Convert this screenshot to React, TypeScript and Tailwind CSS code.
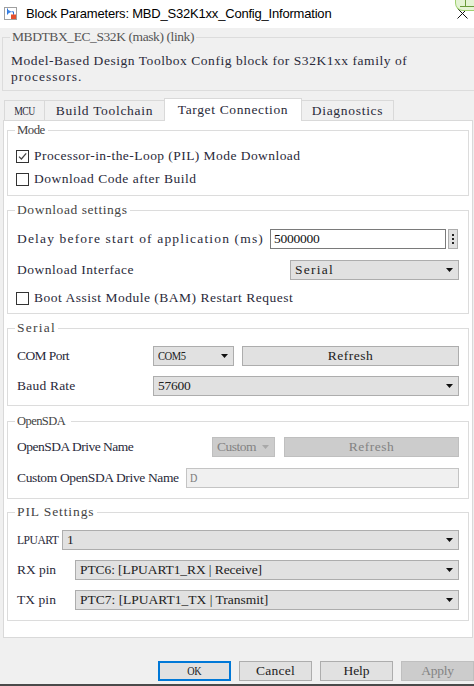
import React, { useLayoutEffect, useRef, useState } from 'react'

let canvas: HTMLCanvasElement | null = null

// SimSun-like look: serif glyphs fitted to a fixed 6.5px advance per character.
// Wide (caps-heavy) strings get squeezed horizontally instead of overlapping.
function T({ children, cw = 6.5, center }: { children: string; cw?: number; center?: boolean }) {
  const ref = useRef<HTMLSpanElement>(null)
  const [fit, setFit] = useState({ ls: 0, sx: 1 })
  useLayoutEffect(() => {
    const measure = () => {
      const el = ref.current
      if (!el) return
      if (!canvas) canvas = document.createElement('canvas')
      const ctx = canvas.getContext('2d')
      if (!ctx) return
      const cs = getComputedStyle(el)
      ctx.font = `${cs.fontWeight} ${cs.fontSize} ${cs.fontFamily}`
      const w = ctx.measureText(children).width
      const n = children.length
      const target = cw * n
      let ls = (target - w) / n
      let sx = 1
      if (ls < -0.6) {
        ls = -0.6
        sx = Math.min(1, (target * 1.06) / (w + ls * n))
      }
      setFit({ ls, sx })
    }
    measure()
    document.fonts?.ready.then(measure)
  }, [children, cw])
  return (
    <span
      ref={ref}
      className="inline-block whitespace-pre"
      style={{
        letterSpacing: `${fit.ls}px`,
        transform: fit.sx !== 1 ? `scaleX(${fit.sx})` : undefined,
        transformOrigin: center ? 'center' : 'left',
      }}
    >
      {children}
    </span>
  )
}

function Arrow({ disabled }: { disabled?: boolean }) {
  return (
    <svg width="7" height="4" viewBox="0 0 7 4" className="shrink-0">
      <path d="M0 0h7L3.5 4z" fill={disabled ? '#a8a8a8' : '#111'} />
    </svg>
  )
}

function Select({ value, className = '', disabled }: { value: string; className?: string; disabled?: boolean }) {
  return (
    <div
      className={`flex h-[20px] items-center justify-between border pl-[4px] pr-[5px] ${
        disabled ? 'border-[#bfbfbf] bg-[#cccccc] text-[#838383]' : 'border-[#adadad] bg-[#e1e1e1] text-[#222]'
      } ${className}`}
    >
      <T>{value}</T>
      <Arrow disabled={disabled} />
    </div>
  )
}

function Button({ label, className = '', disabled }: { label: string; className?: string; disabled?: boolean }) {
  return (
    <div
      className={`flex h-[20px] items-center justify-center border ${
        disabled ? 'border-[#bfbfbf] bg-[#cccccc] text-[#838383]' : 'border-[#adadad] bg-[#e1e1e1] text-[#222]'
      } ${className}`}
    >
      <T center>{label}</T>
    </div>
  )
}

function Check({ checked, label }: { checked?: boolean; label: string }) {
  return (
    <div className="flex h-[20px] items-center gap-[5px]">
      <span className="-ml-[1px] flex h-[13px] w-[13px] items-center justify-center border border-[#333] bg-white">
        {checked && (
          <svg width="9" height="9" viewBox="0 0 9 9">
            <path d="M1 4.6l2.4 2.4L8.2 1.4" stroke="#444" strokeWidth="1.2" fill="none" />
          </svg>
        )}
      </span>
      <T>{label}</T>
    </div>
  )
}

function Group({ title, children, className = '' }: { title: string; children: React.ReactNode; className?: string }) {
  return (
    <fieldset className={`border border-[#dcdcdc] px-[9px] ${className}`}>
      <legend className="-ml-[2px] px-[2px] leading-[16px] text-[#444]">
        <T>{title}</T>
      </legend>
      {children}
    </fieldset>
  )
}

function Label({ text, w }: { text: string; w: string }) {
  return (
    <span className={`shrink-0 ${w}`}>
      <T>{text}</T>
    </span>
  )
}

const tabs = [
  { label: 'MCU', w: 'w-[41px]' },
  { label: 'Build Toolchain', w: 'w-[121px]' },
  { label: 'Target Connection', w: 'w-[138px]', active: true },
  { label: 'Diagnostics', w: 'w-[93px]' },
]

export default function App() {
  return (
    <div className="relative flex h-[686px] w-[474px] flex-col overflow-hidden bg-[#f0f0f0] font-[Liberation_Serif,Times_New_Roman,serif] text-[13.5px] leading-[16px] text-[#2a2a3a]">
      {/* title bar */}
      <div className="relative flex h-[28px] shrink-0 items-center bg-white pl-[4px]">
        <svg width="13" height="13" viewBox="0 0 13 13" className="-mt-[1px]">
          <rect x="0.5" y="0.5" width="12" height="12" fill="#fff" stroke="#a0a0a0" />
          <path d="M3.5 1.5v6" stroke="#2a6fd6" />
          <path d="M3.5 2.5l4 2.3-4 2.3z" fill="#3d86e8" />
          <path d="M7.5 4.8h2v3" stroke="#2a6fd6" fill="none" />
          <rect x="7" y="7.5" width="5" height="4.5" fill="#e5502c" />
        </svg>
        <span className="ml-[9px] font-[Liberation_Sans,Arial,sans-serif] text-[13px] tracking-[-0.2px] text-black">
          Block Parameters: MBD_S32K1xx_Config_Information
        </span>
        <svg width="11" height="11" viewBox="0 0 11 11" className="absolute left-[457px] top-[8px]">
          <path d="M0.5 0.5l10 10M10.5 0.5l-10 10" stroke="#111" strokeWidth="1" />
        </svg>
        <div className="absolute left-[455px] top-0 h-[11px] w-[22px] rounded-bl-[8px] border-b border-l border-[#9fd06f] bg-[#e4f3d4]">
          <svg width="20" height="10" viewBox="0 0 20 10" className="absolute left-[1px] top-0">
            <path d="M8.5 0v6M3 6.5h14" stroke="#6a9a3a" strokeWidth="1" />
          </svg>
        </div>
      </div>

      {/* mask description */}
      <fieldset className="ml-[2px] mt-[1px] w-[473px] border border-[#dcdcdc] pb-[5px] pl-[8px] pt-[8px]">
        <legend className="-ml-[1px] px-[2px] leading-[16px] text-[#555]">
          <T>MBDTBX_EC_S32K (mask) (link)</T>
        </legend>
        <p className="flex flex-col items-start">
          <T>Model-Based Design Toolbox Config block for S32K1xx family of</T>
          <T>processors.</T>
        </p>
      </fieldset>

      {/* tabs */}
      <div className="ml-[4px] mt-[7px] flex h-[22px] items-end">
        {tabs.map((t) =>
          t.active ? (
            <div
              key={t.label}
              className={`relative z-10 -mb-[1px] -ml-[1px] flex h-[23px] items-center justify-center border-l border-r border-t border-[#d9d9d9] bg-white pb-[1px] ${t.w}`}
            >
              <T center>{t.label}</T>
            </div>
          ) : (
            <div
              key={t.label}
              className={`-ml-[1px] flex h-[20px] items-center justify-center border-l border-r border-t border-[#d9d9d9] bg-[#f0f0f0] first:ml-0 ${t.w}`}
            >
              <T center>{t.label}</T>
            </div>
          ),
        )}
      </div>

      {/* panel */}
      <div className="ml-[3px] w-[470px] border border-[#d9d9d9] bg-white px-[3px] pb-[16px] pt-[1px]">
        <Group title="Mode" className="pb-[6px] pt-[8px]">
          <div className="flex flex-col gap-[3px]">
            <Check checked label="Processor-in-the-Loop (PIL) Mode Download" />
            <Check label="Download Code after Build" />
          </div>
        </Group>

        <Group title="Download settings" className="mt-[6px] pb-[5px] pt-[11px]">
          <div className="flex h-[20px] items-center">
            <Label text="Delay before start of application (ms)" w="w-[253px]" />
            <div className="flex h-[20px] w-[176px] items-center border border-[#7a7a7a] bg-white pl-[3px] text-[#111]">
              <T>5000000</T>
            </div>
            <div className="ml-[2px] flex h-[20px] w-[10px] items-center justify-center border border-[#adadad] bg-[#e1e1e1]">
              <svg width="2" height="12" viewBox="0 0 2 12">
                <rect x="0" y="1" width="2" height="2" fill="#222" />
                <rect x="0" y="5" width="2" height="2" fill="#222" />
                <rect x="0" y="9" width="2" height="2" fill="#222" />
              </svg>
            </div>
          </div>
          <div className="mt-[11px] flex h-[20px] items-center">
            <Label text="Download Interface" w="w-[273px]" />
            <Select value="Serial" className="w-[169px]" />
          </div>
          <div className="mt-[8px]">
            <Check label="Boot Assist Module (BAM) Restart Request" />
          </div>
        </Group>

        <Group title="Serial" className="mt-[6px] pb-[9px] pt-[10px]">
          <div className="flex h-[20px] items-center">
            <Label text="COM Port" w="w-[136px]" />
            <Select value="COM5" className="w-[81px]" />
            <Button label="Refresh" className="ml-[8px] w-[217px]" />
          </div>
          <div className="mt-[10px] flex h-[20px] items-center">
            <Label text="Baud Rate" w="w-[136px]" />
            <Select value="57600" className="flex-1" />
          </div>
        </Group>

        <Group title="OpenSDA" className="mt-[7px] pb-[10px] pt-[8px]">
          <div className="flex h-[20px] items-center">
            <Label text="OpenSDA Drive Name" w="w-[195px]" />
            <Select value="Custom" disabled className="w-[63px]" />
            <Button label="Refresh" disabled className="ml-[9px] w-[175px]" />
          </div>
          <div className="mt-[11px] flex h-[20px] items-center">
            <Label text="Custom OpenSDA Drive Name" w="w-[169px]" />
            <div className="flex h-[20px] flex-1 items-center border border-[#c4c4c4] bg-[#f0f0f0] pl-[3px] text-[#7a7a7a]">
              <T>D</T>
            </div>
          </div>
        </Group>

        <Group title="PIL Settings" className="mt-[5px] pb-[10px] pt-[10px]">
          <div className="flex h-[20px] items-center">
            <Label text="LPUART" w="w-[45px]" />
            <Select value="1" className="flex-1" />
          </div>
          <div className="mt-[10px] flex h-[20px] items-center">
            <Label text="RX pin" w="w-[58px]" />
            <Select value="PTC6: [LPUART1_RX | Receive]" className="flex-1" />
          </div>
          <div className="mt-[10px] flex h-[20px] items-center">
            <Label text="TX pin" w="w-[58px]" />
            <Select value="PTC7: [LPUART1_TX | Transmit]" className="flex-1" />
          </div>
        </Group>
      </div>

      {/* dialog buttons */}
      <div className="ml-[158px] mt-[23px] flex gap-[8px]">
        <div className="flex h-[20px] w-[73px] items-center justify-center border-2 border-[#0078d7] bg-[#e1e1e1] text-[#222]">
          <T center>OK</T>
        </div>
        <Button label="Cancel" className="w-[73px]" />
        <Button label="Help" className="w-[73px]" />
        <Button label="Apply" disabled className="w-[73px]" />
      </div>

      <div className="mt-auto h-[2px] w-full bg-[#4a4a4a]" />
    </div>
  )
}
